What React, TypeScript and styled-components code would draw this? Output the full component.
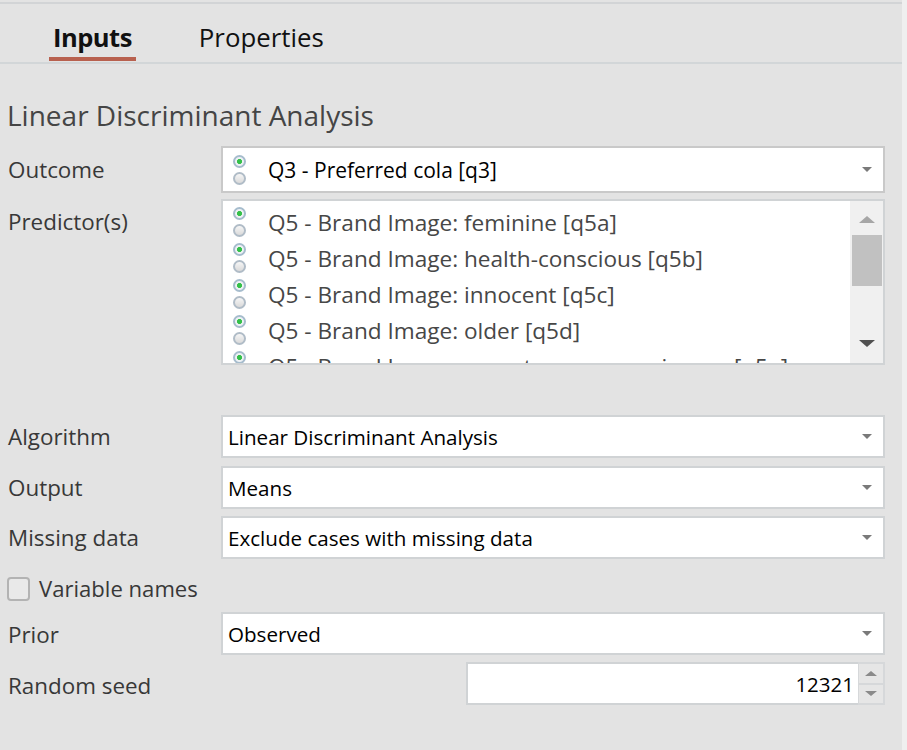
import React from "react";
import styled, { createGlobalStyle } from "styled-components";

const Global = createGlobalStyle`
  html, body { margin: 0; padding: 0; background: #e3e3e3; }
  body { font-family: "Open Sans", "Noto Sans", sans-serif; }
`;

const Page = styled.div`
  display: flex;
  width: 907px;
  height: 750px;
  overflow: hidden;
`;

const Panel = styled.div`
  width: 902px;
  padding-top: 2px;
  background: #e3e3e3;
  display: flex;
  flex-direction: column;
`;

const Strip = styled.div`
  width: 5px;
  background: #efefef;
`;

const TabBar = styled.div`
  border-top: 2px solid #d2d4d6;
  border-bottom: 2px solid #d2d6d8;
  height: 62px;
  display: flex;
  align-items: flex-start;
  padding-left: 49px;
  gap: 59px;
  box-sizing: border-box;
`;

const Tab = styled.div<{ $active?: boolean }>`
  font-size: ${(p) => (p.$active ? "25.5px" : "25.8px")};
  font-weight: ${(p) => (p.$active ? 700 : 400)};
  color: #111;
  padding: 21px 4px 0;
  height: 57px;
  box-sizing: border-box;
  line-height: 1;
  letter-spacing: ${(p) => (p.$active ? "-0.5px" : "0")};
  border-bottom: 4px solid ${(p) => (p.$active ? "#b8614f" : "transparent")};
`;

const Body = styled.div`
  padding: 33px 17px 0 7px;
  display: flex;
  flex-direction: column;
`;

const Title = styled.div`
  font-size: 28px;
  color: #454545;
  line-height: 36px;
  margin-bottom: 13px;
`;

const Row = styled.div<{ $mb?: number; $top?: boolean }>`
  display: flex;
  align-items: ${(p) => (p.$top ? "flex-start" : "center")};
  margin-bottom: ${(p) => p.$mb ?? 7}px;
`;

const Label = styled.div<{ $offset?: number }>`
  width: 213px;
  flex-shrink: 0;
  font-size: 22.4px;
  line-height: 30px;
  color: #383838;
  padding-left: 1px;
  margin-top: ${(p) => p.$offset ?? 0}px;
`;

const SelectBox = styled.div<{ $h: number }>`
  flex: 1;
  height: ${(p) => p.$h}px;
  box-sizing: border-box;
  background: #fff;
  border: 2px solid #d0d3d5;
  display: flex;
  align-items: center;
  padding-left: 5px;
  position: relative;
  font-size: 20.6px;
  color: #000;
`;

const OutcomeBox = styled(SelectBox)`
  border-color: #c9c9c9;
  padding-left: 10px;
  font-size: 21px;
`;

const Caret = styled.div`
  position: absolute;
  right: 11px;
  top: 50%;
  margin-top: -3px;
  width: 0;
  height: 0;
  border-left: 5px solid transparent;
  border-right: 5px solid transparent;
  border-top: 5px solid #7a7a7a;
`;

const RadioStack = styled.div`
  display: flex;
  flex-direction: column;
  gap: 4px;
  width: 14px;
  margin-right: 21px;
  flex-shrink: 0;
`;

const RadioDot = styled.div<{ $on?: boolean }>`
  width: 13px;
  height: 13px;
  box-sizing: border-box;
  border-radius: 50%;
  border: 2px solid ${(p) => (p.$on ? "#a6bccd" : "#b0bcc7")};
  background: ${(p) =>
    p.$on
      ? "radial-gradient(circle, #35c04a 0 2.2px, #eef2f5 2.9px)"
      : "linear-gradient(#f6f6f6, #dadada)"};
`;

const ListBox = styled.div`
  flex: 1;
  height: 166px;
  box-sizing: border-box;
  background: #fff;
  border: 2px solid #d0d3d5;
  display: flex;
  overflow: hidden;
`;

const ListItems = styled.div`
  flex: 1;
  padding: 5px 0 0 10px;
  display: flex;
  flex-direction: column;
  gap: 4px;
  overflow: hidden;
`;

const ListItem = styled.div`
  display: flex;
  align-items: center;
  height: 32px;
  font-size: 22.6px;
  color: #474747;
  white-space: nowrap;
  flex-shrink: 0;
`;

const ScrollBar = styled.div`
  width: 33px;
  flex-shrink: 0;
  background: #f0f0f0;
  display: flex;
  flex-direction: column;
  align-items: center;
  padding: 15px 0 16px;
  box-sizing: border-box;
`;

const Arrow = styled.div<{ $up?: boolean; $color: string; $size?: number }>`
  width: 0;
  height: 0;
  border-left: ${(p) => p.$size ?? 8}px solid transparent;
  border-right: ${(p) => p.$size ?? 8}px solid transparent;
  ${(p) =>
    p.$up
      ? `border-bottom: ${Math.round((p.$size ?? 8) * 0.85)}px solid ${p.$color};`
      : `border-top: ${Math.round((p.$size ?? 8) * 0.85)}px solid ${p.$color};`}
`;

const Thumb = styled.div`
  width: 30px;
  height: 51px;
  background: #c1c1c1;
  margin-top: 12px;
`;

const Spacer = styled.div`
  flex: 1;
`;

const CheckRow = styled.div`
  display: flex;
  align-items: center;
  gap: 9px;
  height: 24px;
  margin-bottom: 11px;
`;

const CheckBox = styled.div`
  width: 23px;
  height: 24px;
  box-sizing: border-box;
  border: 2px solid #b3b3b3;
  border-radius: 4px;
  background: #e9e9e9;
`;

const CheckLabel = styled.div`
  font-size: 22.1px;
  color: #383838;
  margin-top: -2px;
`;

const SeedWrap = styled.div`
  flex: 1;
  display: flex;
  justify-content: flex-end;
`;

const SeedInput = styled.div`
  width: 392px;
  height: 43px;
  box-sizing: border-box;
  background: #fff;
  border: 2px solid #d0d3d5;
  border-right: none;
  display: flex;
  align-items: center;
  justify-content: flex-end;
  padding-right: 4px;
  font-size: 20.5px;
  color: #000;
`;

const Spinner = styled.div`
  width: 27px;
  height: 43px;
  box-sizing: border-box;
  border: 2px solid #d6d8da;
  border-left-width: 1px;
  display: flex;
  flex-direction: column;
  gap: 2px;
  background: #d6d8da;
`;

const SpinBtn = styled.div`
  flex: 1;
  background: #e6e6e6;
  display: flex;
  align-items: center;
  justify-content: center;
`;

const predictors = [
  "Q5 - Brand Image: feminine [q5a]",
  "Q5 - Brand Image: health-conscious [q5b]",
  "Q5 - Brand Image: innocent [q5c]",
  "Q5 - Brand Image: older [q5d]",
  "Q5 - Brand Image: open to new experiences [q5e]",
];

const Radio = () => (
  <RadioStack>
    <RadioDot $on />
    <RadioDot />
  </RadioStack>
);

const Select = ({ value }: { value: string }) => (
  <SelectBox $h={43}>
    {value}
    <Caret />
  </SelectBox>
);

export default function App() {
  return (
    <Page>
      <Global />
      <Panel>
        <TabBar>
          <Tab $active>Inputs</Tab>
          <Tab>Properties</Tab>
        </TabBar>
        <Body>
          <Title>Linear Discriminant Analysis</Title>
          <Row $mb={6}>
            <Label>Outcome</Label>
            <OutcomeBox $h={47}>
              <Radio />
              Q3 - Preferred cola [q3]
              <Caret />
            </OutcomeBox>
          </Row>
          <Row $top $mb={50}>
            <Label $offset={8}>Predictor(s)</Label>
            <ListBox>
              <ListItems>
                {predictors.map((p) => (
                  <ListItem key={p}>
                    <Radio />
                    {p}
                  </ListItem>
                ))}
              </ListItems>
              <ScrollBar>
                <Arrow $up $color="#a6a6a6" />
                <Thumb />
                <Spacer />
                <Arrow $color="#505050" />
              </ScrollBar>
            </ListBox>
          </Row>
          <Row $mb={8}>
            <Label>Algorithm</Label>
            <Select value="Linear Discriminant Analysis" />
          </Row>
          <Row>
            <Label>Output</Label>
            <Select value="Means" />
          </Row>
          <Row $mb={18}>
            <Label>Missing data</Label>
            <Select value="Exclude cases with missing data" />
          </Row>
          <CheckRow>
            <CheckBox />
            <CheckLabel>Variable names</CheckLabel>
          </CheckRow>
          <Row>
            <Label $offset={2}>Prior</Label>
            <Select value="Observed" />
          </Row>
          <Row>
            <Label $offset={4}>Random seed</Label>
            <SeedWrap>
              <SeedInput>12321</SeedInput>
              <Spinner>
                <SpinBtn>
                  <Arrow $up $color="#8a8a8a" $size={6} />
                </SpinBtn>
                <SpinBtn>
                  <Arrow $color="#8a8a8a" $size={6} />
                </SpinBtn>
              </Spinner>
            </SeedWrap>
          </Row>
        </Body>
      </Panel>
      <Strip />
    </Page>
  );
}
